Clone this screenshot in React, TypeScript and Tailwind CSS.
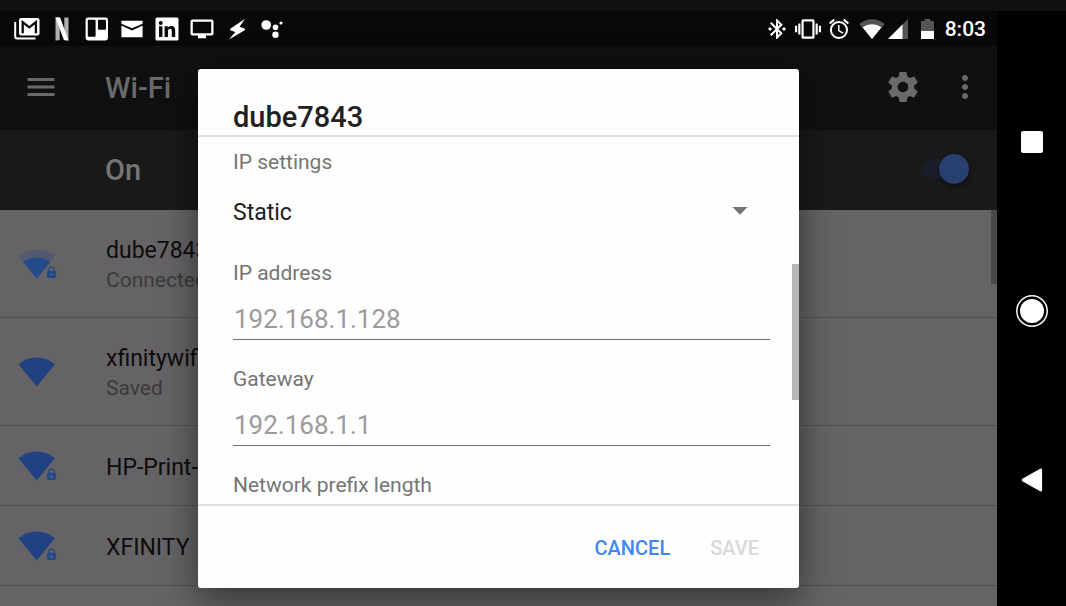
import React from "react";
import {
  MdAlarm,
  MdBluetoothConnected,
  MdMenu,
  MdMoreVert,
  MdVibration,
} from "react-icons/md";

type Network = {
  name: string;
  status?: string;
  secured: boolean;
  weak?: boolean;
};

const networks: Network[] = [
  { name: "dube7843", status: "Connected", secured: true, weak: true },
  { name: "xfinitywifi", status: "Saved", secured: false },
  { name: "HP-Print-", secured: true },
  { name: "XFINITY", secured: true },
];

function Slot({ children }: { children: React.ReactNode }) {
  return <span className="flex w-[35px] justify-center">{children}</span>;
}

function NotificationIcons() {
  return (
    <div className="flex items-center pl-[9px]">
      <Slot>
        <svg width="26" height="24" viewBox="0 0 26 24" fill="none">
          <path d="M1.200 5v14.500q0 2 2 2H21.500" stroke="#fff" strokeWidth="2" />
          <rect x="5" y="1" width="20.500" height="17.500" rx="2.200" fill="#fff" />
          <path d="M8.700 16.300V5.200l6.600 5.200 6.600-5.200v11.100" stroke="#080808" strokeWidth="2.300" />
        </svg>
      </Slot>
      <Slot>
        <svg width="14" height="24" viewBox="0 0 14 24">
          <path d="M.5.5h4.2v22.7l-4.200.3zM9.300.5h4.200v23l-4.200-.3z" fill="#b0b0b0" />
          <path d="M.5.5h4.600l8.400 23-4.600-.4z" fill="#fff" />
        </svg>
      </Slot>
      <Slot>
        <svg width="24" height="24" viewBox="0 0 24 24">
          <path
            fillRule="evenodd"
            fill="#fff"
            d="M3 .6h17.6a2.4 2.4 0 0 1 2.4 2.4v18a2.4 2.4 0 0 1-2.4 2.4H3A2.4 2.4 0 0 1 .6 21V3A2.4 2.4 0 0 1 3 .6zM3.8 2.8q-1 0-1 1v15q0 1 1 1h5.8q1 0 1-1v-15q0-1-1-1zM14 2.8q-1 0-1 1v8q0 1 1 1h6q1 0 1-1v-8q0-1-1-1z"
          />
        </svg>
      </Slot>
      <Slot>
        <svg width="22" height="18" viewBox="0 0 22 18" fill="#fff">
          <path d="M1 .8h20q.6 0 .6.6v2.4L11 8.2.4 3.8V1.400Q.4.8 1 .8z" />
          <path d="M.4 5.600 11 10.400l10.600-4.800v11q0 .7-.7.7H1.100q-.7 0-.7-.7z" />
        </svg>
      </Slot>
      <Slot>
        <svg width="24" height="24" viewBox="0 0 24 24">
          <rect x=".5" y=".5" width="23" height="23" rx="1.600" fill="#fff" />
          <g fill="#080808">
            <circle cx="5.700" cy="5.900" r="2" />
            <path d="M4 9.300h3.400v10.700H4zM9.600 9.300h3.200v1.500c.6-1.100 1.800-1.800 3.300-1.800 3.100 0 4.100 1.900 4.100 4.900v6.100h-3.400v-5.500c0-1.500-.3-2.700-1.800-2.700s-2 1.100-2 2.600v5.600H9.600z" />
          </g>
        </svg>
      </Slot>
      <Slot>
        <svg width="24" height="20" viewBox="0 0 24 20" fill="#fff">
          <path
            fillRule="evenodd"
            d="M2.500.5h19a2 2 0 0 1 2 2v12a2 2 0 0 1-2 2H16v2.700H8v-2.700H2.500a2 2 0 0 1-2-2v-12a2 2 0 0 1 2-2zM2.800 2.700v11.600h18.400V2.700z"
          />
        </svg>
      </Slot>
      <Slot>
        <svg width="18" height="22" viewBox="0 0 18 22" fill="#fff">
          <path d="M17 .7 2.400 10.700q-.8 1.300.3 1.900L7.300 14 1 21.500l15.700-9.300q.9-1.200-.2-1.800L11.600 8.800z" />
        </svg>
      </Slot>
      <Slot>
        <svg width="22" height="20" viewBox="0 0 22 20" fill="#fff">
          <circle cx="5.200" cy="6" r="4.800" />
          <circle cx="14.500" cy="8.200" r="2.800" />
          <circle cx="14.500" cy="15.700" r="3.200" />
          <circle cx="20" cy="4" r="1.600" />
        </svg>
      </Slot>
    </div>
  );
}

function SystemIcons() {
  return (
    <div className="flex items-center pr-[11px] text-white">
      <span className="flex w-[31px] justify-center">
        <MdBluetoothConnected size={24} />
      </span>
      <span className="flex w-[31px] justify-center">
        <MdVibration size={26} />
      </span>
      <span className="flex w-[31px] justify-center">
        <MdAlarm size={24} />
      </span>
      <div className="ml-1 flex items-center gap-[3px]">
        <svg width="26" height="20" viewBox="0 0 26 20">
          <path d="M13 20 .3 5Q6 .3 13 .3T25.700 5z" fill="#555" />
          <path d="M13 20 3.600 8.300Q7.600 5.300 13 5.300t9.400 3z" fill="#fff" />
        </svg>
        <svg width="20" height="20" viewBox="0 0 20 20">
          <path d="M20 0v20H0z" fill="#555" />
          <path d="M14.500 5.500V20H0z" fill="#fff" />
        </svg>
      </div>
      <svg className="ml-[13px]" width="13" height="20" viewBox="0 0 13 20">
        <path d="M3.500 0h6v2H13v10H0V2h3.500z" fill="#555" />
        <path d="M0 12h13v8H0z" fill="#fff" />
      </svg>
      <time className="ml-[11px] text-[21px] leading-6 font-medium">8:03</time>
    </div>
  );
}

function GearIcon() {
  return (
    <svg width="36" height="36" viewBox="0 0 24 24" fill="currentColor">
      <path d="M19.43 12.98c.04-.32.07-.64.07-.98s-.03-.66-.07-.98l2.11-1.65c.19-.15.24-.42.12-.64l-2-3.46c-.12-.22-.39-.3-.61-.22l-2.49 1c-.52-.4-1.08-.73-1.69-.98l-.38-2.65C14.46 2.18 14.25 2 14 2h-4c-.25 0-.46.18-.49.42l-.38 2.65c-.61.25-1.17.59-1.69.98l-2.49-1c-.23-.09-.49 0-.61.22l-2 3.46c-.13.22-.07.49.12.64l2.11 1.65c-.04.32-.07.65-.07.98s.03.66.07.98l-2.11 1.65c-.19.15-.24.42-.12.64l2 3.46c.12.22.39.3.61.22l2.49-1c.52.4 1.08.73 1.69.98l.38 2.65c.03.24.24.42.49.42h4c.25 0 .46-.18.49-.42l.38-2.65c.61-.25 1.17-.59 1.69-.98l2.49 1c.23.09.49 0 .61-.22l2-3.46c.12-.22.07-.49-.12-.64l-2.11-1.65zM12 15.5c-1.93 0-3.5-1.57-3.5-3.5s1.57-3.5 3.5-3.5 3.5 1.57 3.5 3.5-1.57 3.5-3.5 3.5z" />
    </svg>
  );
}

function WifiIcon({ secured, weak }: { secured: boolean; weak?: boolean }) {
  return (
    <svg width="40" height="30" viewBox="0 0 40 30" className="shrink-0">
      <path
        d="M18.700 29.500.5 7.300Q8.500.6 18.700.6T37 7.300z"
        fill={weak ? "#525a70" : "#214280"}
      />
      {weak && <path d="M18.700 29.500 5.200 13Q11 8.400 18.700 8.400T32.300 13z" fill="#254a8c" />}
      {secured && (
        <g>
          <path
            d="M27.500 30V21q0-1.500 2-1.800 .5-3.700 4-3.700t4 3.700q2 .3 2 1.800V30z"
            fill="#656365"
          />
          <path d="M31 22.500v-1.800a2.500 2.500 0 0 1 5 0v1.800" stroke="#254a8c" strokeWidth="1.300" fill="none" />
          <path
            fillRule="evenodd"
            d="M30 21.800h7q1 0 1 1v5.200q0 1-1 1h-7q-1 0-1-1v-5.200q0-1 1-1zM33.500 24.200a1.200 1.200 0 1 0 0 2.400 1.200 1.200 0 0 0 0-2.400z"
            fill="#254a8c"
          />
        </g>
      )}
    </svg>
  );
}

function NetworkRow({ network }: { network: Network }) {
  return (
    <li className="border-b border-[#525052]">
      <button
        type="button"
        className={
          network.status
            ? "flex h-[107px] w-full items-center gap-12 pl-[18px] text-left"
            : "flex h-[79px] w-full items-center gap-12 pl-[18px] text-left"
        }
      >
        <WifiIcon secured={network.secured} weak={network.weak} />
        <span className="flex flex-col pt-1">
          <span className="text-[23px] leading-[30px] text-[#0d0d0d]">{network.name}</span>
          {network.status && (
            <span className="text-[21px] leading-[29px] text-[#3b3a3b]">{network.status}</span>
          )}
        </span>
      </button>
    </li>
  );
}

function AddressField({ id, label, hint }: { id: string; label: string; hint?: string }) {
  return (
    <div className="flex flex-col gap-[13px]">
      <label htmlFor={id} className="text-[21px] leading-[26px] text-[#757575]">
        {label}
      </label>
      <input
        id={id}
        type="text"
        placeholder={hint}
        className="h-[41px] w-full border-b border-[#6f6f6f] bg-transparent pl-px text-[26px] text-[#212121] outline-none placeholder:text-[#9c9a9c]"
      />
    </div>
  );
}

function NetworkDialog() {
  return (
    <div
      role="dialog"
      aria-labelledby="dialog-title"
      className="flex w-full max-w-[601px] flex-col rounded-[3px] bg-[#fefefe] shadow-[0_10px_36px_rgba(0,0,0,0.5)]"
    >
      <h2
        id="dialog-title"
        className="border-b-2 border-[#dedede] px-[35px] pt-[30px] text-[29px] leading-9 font-medium text-[#212121]"
      >
        dube7843
      </h2>
      <div className="relative h-[367px]">
        <div className="flex h-full flex-col gap-[26px] overflow-hidden pt-3 pr-[29px] pl-[35px]">
          <div className="flex flex-col gap-[13px]">
            <label htmlFor="ip-settings" className="text-[21px] leading-[26px] text-[#757575]">
              IP settings
            </label>
            <div className="grid items-center">
              <select
                id="ip-settings"
                defaultValue="Static"
                className="col-start-1 row-start-1 h-[46px] w-full appearance-none bg-transparent pt-1 text-[23px] text-[#212121] outline-none"
              >
                <option>DHCP</option>
                <option>Static</option>
              </select>
              <svg
                width="16"
                height="8"
                viewBox="0 0 16 8"
                className="pointer-events-none col-start-1 row-start-1 mr-[22px] justify-self-end"
              >
                <path d="M.5 0h15L8 7.700z" fill="#757575" />
              </svg>
            </div>
          </div>
          <AddressField id="ip-address" label="IP address" hint="192.168.1.128" />
          <AddressField id="gateway" label="Gateway" hint="192.168.1.1" />
          <AddressField id="prefix-length" label="Network prefix length" />
        </div>
        <div className="absolute top-[127px] right-0 h-[136px] w-[7px] bg-[#b6b5b6]" />
      </div>
      <div className="flex h-[84px] items-center justify-end gap-10 border-t-2 border-[#dedede] pt-0.5 pr-10 text-[20px] font-medium">
        <button type="button" className="text-[#4285f4]">
          CANCEL
        </button>
        <button type="button" disabled className="text-[#d9d8da]">
          SAVE
        </button>
      </div>
    </div>
  );
}

function NavigationBar() {
  return (
    <nav className="flex w-[69px] shrink-0 flex-col items-center gap-[121px] bg-black pt-[107px]">
      <button type="button" aria-label="Recent apps" className="flex size-12 items-center justify-center">
        <span className="size-[22px] rounded-[2px] bg-white" />
      </button>
      <button type="button" aria-label="Home" className="flex size-12 items-center justify-center">
        <svg width="32" height="32" viewBox="0 0 32 32">
          <circle cx="16" cy="16" r="15.200" fill="none" stroke="#fff" strokeWidth="1.500" />
          <circle cx="16" cy="16" r="12" fill="#fff" />
        </svg>
      </button>
      <button type="button" aria-label="Back" className="flex size-12 items-center justify-center">
        <svg width="22" height="24" viewBox="0 0 22 24">
          <path
            d="M2 12 19.800 1.800v20.400z"
            fill="#fff"
            stroke="#fff"
            strokeWidth="2.600"
            strokeLinejoin="round"
          />
        </svg>
      </button>
    </nav>
  );
}

export default function App() {
  return (
    <div className="flex h-screen flex-col overflow-hidden bg-[#0f0f0f] pt-[11px] font-['Roboto',sans-serif]">
      <div className="flex min-h-0 flex-1">
        <main className="relative flex min-w-0 flex-1 flex-col overflow-hidden bg-[#656365]">
          <div className="flex h-[35px] shrink-0 items-center justify-between bg-[#080808]">
            <NotificationIcons />
            <SystemIcons />
          </div>
          <header className="flex h-[84px] shrink-0 items-center bg-[#101010] pr-3.5 pb-0.5 pl-[23px] text-[#6a6a6a]">
            <button type="button" aria-label="Menu">
              <MdMenu size={36} />
            </button>
            <h1 className="ml-[46px] flex-1 pt-0.5 text-[29px] leading-9 font-medium">Wi-Fi</h1>
            <button type="button" aria-label="Settings">
              <GearIcon />
            </button>
            <button type="button" aria-label="More options" className="ml-[26px]">
              <MdMoreVert size={36} />
            </button>
          </header>
          <div className="flex h-20 shrink-0 items-center justify-between bg-[#191919] pr-[30px] pl-[105px] text-[#757575]">
            <label htmlFor="wifi-switch" className="text-[29px] leading-9 font-medium">
              On
            </label>
            <input
              id="wifi-switch"
              type="checkbox"
              role="switch"
              defaultChecked
              className="mb-0.5 flex h-5 w-[45px] appearance-none items-center justify-end rounded-full bg-[#1a1e2b] before:-mr-0.5 before:size-[30px] before:shrink-0 before:rounded-full before:bg-[#27406f] before:shadow-[0_2px_4px_rgba(0,0,0,0.5)]"
            />
          </div>
          <div className="relative">
            <ul>
              {networks.map((network) => (
                <NetworkRow key={network.name} network={network} />
              ))}
            </ul>
            <div className="absolute top-0 right-0 h-[74px] w-1.5 bg-[#4a494a]" />
          </div>
          <div className="absolute inset-0 flex items-start justify-center pt-[58px]">
            <NetworkDialog />
          </div>
        </main>
        <NavigationBar />
      </div>
    </div>
  );
}
